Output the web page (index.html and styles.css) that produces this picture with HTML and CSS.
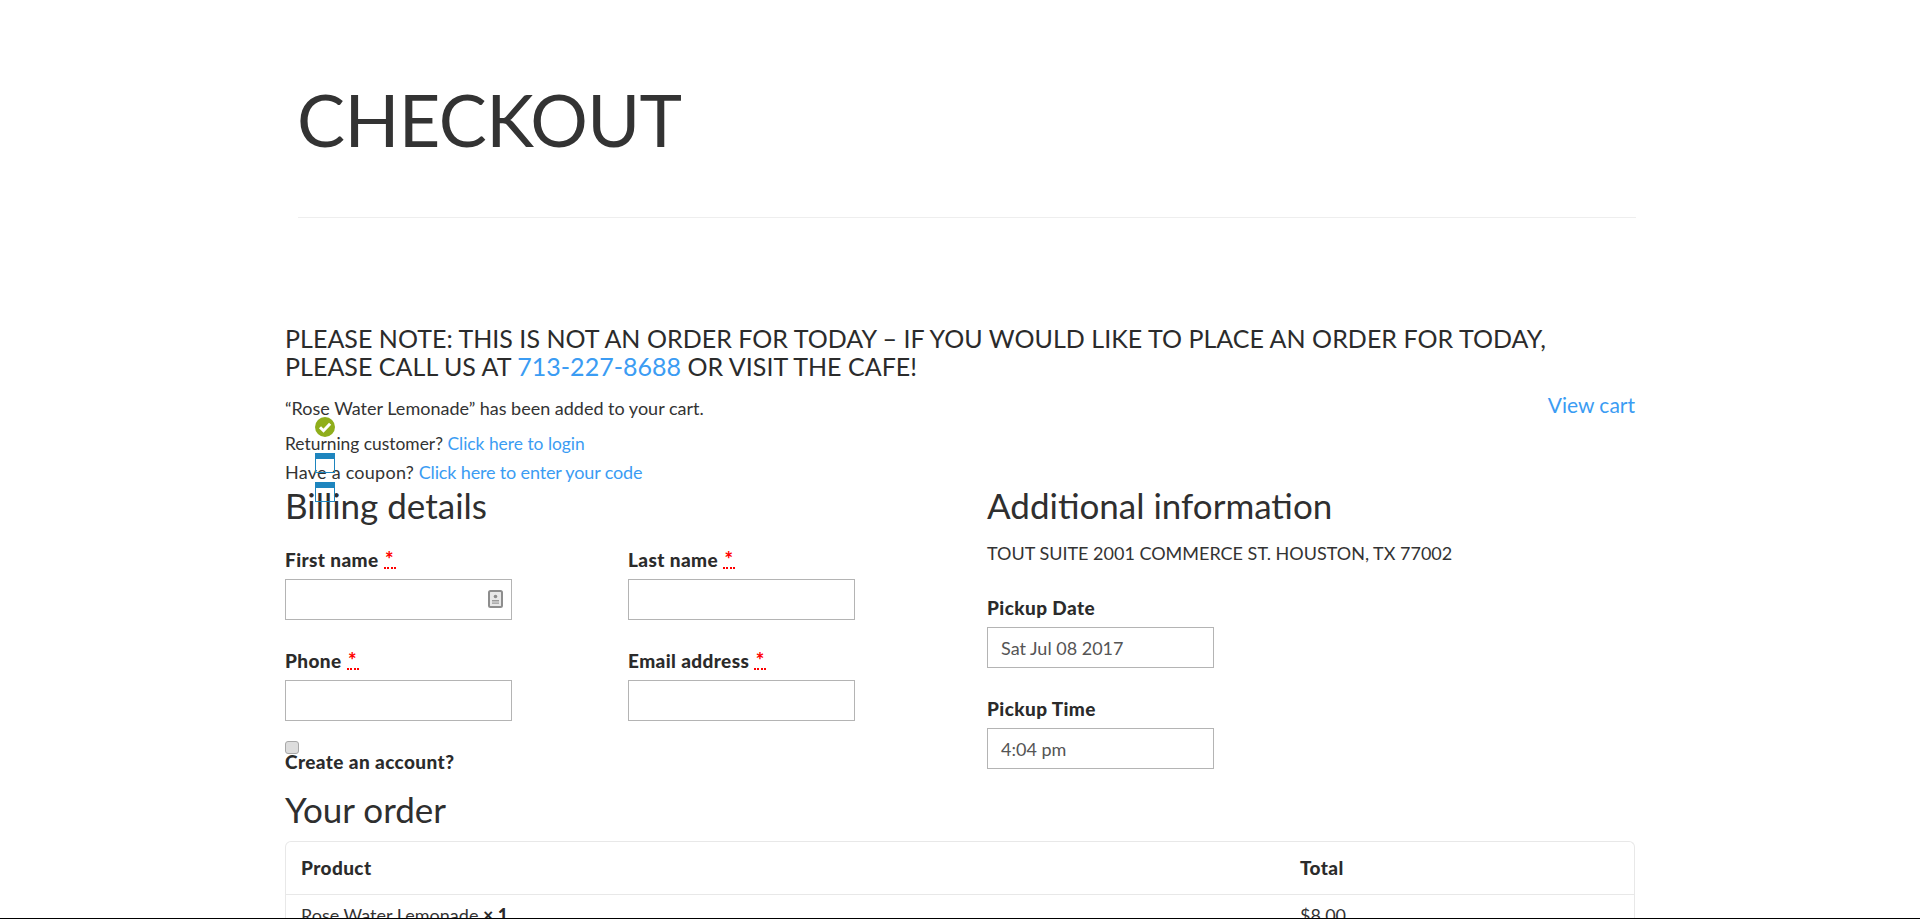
FILE: index.html
```html
<!DOCTYPE html>
<html lang="en">
<head>
<meta charset="utf-8">
<title>Checkout</title>
<link rel="stylesheet" href="styles.css">
</head>
<body>
<div class="page">
  <header class="page-head">
    <h1 class="page-title">CHECKOUT</h1>
  </header>
  <main class="content">
    <p class="notice">PLEASE NOTE: THIS IS NOT AN ORDER FOR TODAY – IF YOU WOULD LIKE TO PLACE AN ORDER FOR TODAY, PLEASE CALL US AT <a href="#">713-227-8688</a> OR VISIT THE CAFE!</p>
    <div class="messages">
      <div class="msg-row msg-added"><span>“Rose Water Lemonade” has been added to your cart.</span><a class="view-cart" href="#">View cart</a></div>
      <div class="msg-row msg-login"><span>Returning customer? <a href="#">Click here to login</a></span></div>
      <div class="msg-row msg-coupon"><span><span class="coupon-lead">Have a coupon?</span> <a class="coupon-link" href="#">Click here to enter your code</a></span></div>
      <svg class="msg-icon icon-check" viewBox="0 0 20 20"><circle cx="10" cy="10" r="10" fill="#8fae1b"/><path d="M5 10.2l3.5 3.5 6.6-7" fill="none" stroke="#fff" stroke-width="3"/></svg>
      <svg class="msg-icon icon-window-a" viewBox="0 0 20 20"><rect x=".5" y=".5" width="19" height="19" fill="none" stroke="#1e85be"/><rect width="20" height="6" fill="#1e85be"/></svg>
      <svg class="msg-icon icon-window-b" viewBox="0 0 20 20"><rect x=".5" y=".5" width="19" height="19" fill="none" stroke="#1e85be"/><rect width="20" height="6" fill="#1e85be"/></svg>
    </div>
    <div class="columns">
      <section class="billing">
        <h3 class="section-title">Billing details</h3>
        <div class="field-grid">
          <div class="field">
            <label class="label">First name <abbr class="req">*</abbr></label>
            <div class="input">
              <svg class="autofill" viewBox="0 0 15 18"><rect x="1" y="1" width="13" height="16" rx="1.5" fill="#e8e8e8" stroke="#8d8d8d" stroke-width="2"/><circle cx="7.5" cy="6.5" r="1.8" fill="#8d8d8d"/><path d="M4 10h7v1.6H4zM4 12.6h7v1.2H4z" fill="#9a9a9a"/></svg>
            </div>
          </div>
          <div class="field">
            <label class="label">Last name <abbr class="req">*</abbr></label>
            <div class="input"></div>
          </div>
          <div class="field">
            <label class="label">Phone <abbr class="req">*</abbr></label>
            <div class="input"></div>
          </div>
          <div class="field">
            <label class="label">Email address <abbr class="req">*</abbr></label>
            <div class="input"></div>
          </div>
        </div>
        <span class="checkbox"></span>
        <label class="label create">Create an account?</label>
      </section>
      <section class="additional">
        <h3 class="section-title">Additional information</h3>
        <p class="address">TOUT SUITE 2001 COMMERCE ST. HOUSTON, TX 77002</p>
        <div class="field field-date">
          <label class="label">Pickup Date</label>
          <div class="input">Sat Jul 08 2017</div>
        </div>
        <div class="field field-time">
          <label class="label">Pickup Time</label>
          <div class="input">4:04 pm</div>
        </div>
      </section>
    </div>
    <h3 class="section-title order-title">Your order</h3>
    <div class="order">
      <div class="order-row order-head"><span class="col-product">Product</span><span class="col-total">Total</span></div>
      <div class="order-row order-item"><span class="col-product">Rose Water Lemonade <b class="qty">× 1</b></span><span class="col-total">$8.00</span></div>
    </div>
  </main>
</div>
<div class="bottom-line"></div>
</body>
</html>
```
FILE: styles.css
```css
html, body {
  margin: 0;
  height: 919px;
  overflow: hidden;
  background: #fff;
}
body {
  position: relative;
  font-family: "Lato", "Liberation Sans", sans-serif;
  font-size: 18px;
  color: #333;
}
a { color: #3b9cf3; text-decoration: none; }
.page {
  width: 1351px;
  margin-left: 285px;
}
.page-head {
  margin-left: 13px;
  height: 217px;
  border-bottom: 1px solid #eee;
}
.page-title {
  margin: 0 0 0 -1px;
  padding-top: 74px;
  font-size: 72px;
  line-height: 90px;
  font-weight: 400;
  letter-spacing: -.6px;
  color: #333;
}
.content { padding-top: 106px; }
.notice {
  margin: 0;
  width: 1280px;
  font-size: 25px;
  line-height: 28px;
  letter-spacing: .03px;
  color: #2b2b2b;
}
.messages {
  position: relative;
  margin-top: 9px;
  width: 1350px;
  font-size: 18px;
}
.msg-row {
  display: flex;
  justify-content: space-between;
  align-items: flex-start;
  height: 28px;
  line-height: 28px;
}
.msg-added { height: 41px; line-height: 38px; }
.msg-login { font-size: 17.4px; }
.msg-coupon { height: 26px; }
.coupon-lead { letter-spacing: .25px; }
.coupon-link { letter-spacing: -.15px; }
.view-cart { font-size: 21px; line-height: 32px; }
.msg-icon { position: absolute; left: 30px; width: 20px; height: 20px; }
.icon-check { top: 28px; }
.icon-window-a { top: 64px; }
.icon-window-b { top: 93px; }
.columns {
  display: flex;
}
.billing { width: 702px; }
.additional { flex: 1; }
.section-title {
  margin: -1px 0 0;
  font-size: 35px;
  line-height: 44px;
  font-weight: 400;
  color: #2f2f2f;
}
.field-grid {
  display: grid;
  grid-template-columns: 227px 227px;
  column-gap: 116px;
  row-gap: 28px;
  margin-top: 20px;
}
.label {
  display: block;
  font-size: 19px;
  font-weight: 900;
  line-height: 26px;
  letter-spacing: .4px;
  color: #2b2b2b;
}
.req {
  display: inline-block;
  width: 12px;
  text-align: center;
  line-height: 15px;
  font-size: 20px;
  color: #f00;
  border-bottom: 2px dotted #f00;
  text-decoration: none;
}
.input {
  position: relative;
  display: flex;
  align-items: center;
  box-sizing: border-box;
  width: 227px;
  height: 41px;
  margin-top: 6px;
  padding-left: 13px;
  border: 1px solid #b4b4b4;
  font-size: 18px;
  color: #555;
}
.autofill {
  position: absolute;
  right: 8px;
  top: 10px;
  width: 15px;
  height: 18px;
}
.checkbox {
  display: block;
  box-sizing: border-box;
  width: 14px;
  height: 13px;
  margin-top: 20px;
  background: #ddd;
  border: 1px solid #a8a8a8;
  border-radius: 3px;
}
.create { margin-top: -5px; }
.address {
  margin: 13px 0 0;
  font-size: 18px;
  line-height: 26px;
  color: #333;
}
.field-date { margin-top: 29px; }
.field-time { margin-top: 28px; }
.order-title { margin: 12px 0 10px; }
.order {
  width: 1350px;
  border: 1px solid #e8e8e8;
  border-bottom: 0;
  border-radius: 6px 6px 0 0;
  box-sizing: border-box;
}
.order-row {
  display: flex;
  padding: 0 15px;
  line-height: 26px;
}
.order-head {
  height: 52px;
  align-items: center;
  font-size: 19px;
  font-weight: 900;
  letter-spacing: .4px;
  color: #2b2b2b;
  border-bottom: 1px solid #e8e8e8;
}
.order-item { padding-top: 7px; }
.col-product { width: 999px; }
.qty { font-weight: 900; color: #2b2b2b; }
.bottom-line {
  position: absolute;
  left: 0;
  right: 0;
  top: 918px;
  height: 1px;
  background: #000;
}
```
